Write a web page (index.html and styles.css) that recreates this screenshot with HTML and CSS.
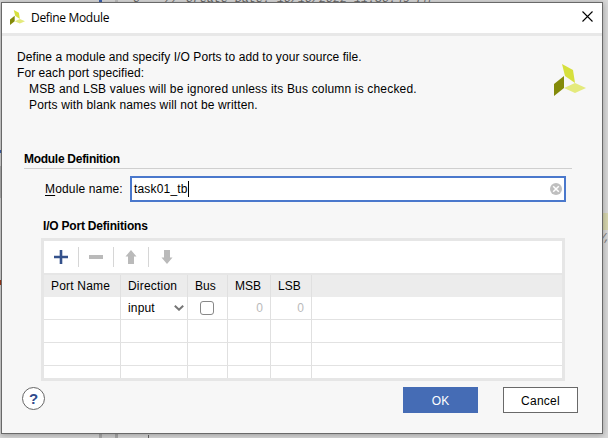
FILE: index.html
```html
<!DOCTYPE html>
<html lang="en">
<head>
<meta charset="utf-8">
<title>Define Module</title>
<link rel="stylesheet" href="styles.css">
</head>
<body>
<div class="editor" aria-hidden="true">
  <span class="line-no">6</span><span class="code">// Create Date: 10/10/2022 11:36:49 PM</span>
  <i class="mark tab"></i><i class="mark gutter"></i><i class="mark side"></i><i class="mark side-dark"></i><i class="mark current"></i>
  <i class="mark pane"></i><i class="mark pane-edge"></i><i class="mark red"></i><span class="slash">/,</span><i class="mark caret-bottom"></i>
</div>
<main class="dialog">
  <header class="titlebar">
    <svg class="logo-small" viewBox="0 0 32 32"><path fill="#d6e03d" d="M8 0l11 6 2 13-10-7z"/><path fill="#838a09" d="M0 20l10-8v12L0 32z"/><path fill="#e4ea7c" d="M10 24l11-5 11 5-11 5z"/></svg>
    <h1>Define Module</h1>
    <svg class="close" viewBox="0 0 11 11"><path d="M.5.5l10 10M10.500.5l-10 10" fill="none" stroke="#000" stroke-width="1.1"/></svg>
  </header>
  <section class="intro">
    <div class="copy">
      <p class="l1">Define a module and specify I/O Ports to add to your source file.</p>
      <p class="l2">For each port specified:</p>
      <p class="l3 indent">MSB and LSB values will be ignored unless its Bus column is checked.</p>
      <p class="l4 indent">Ports with blank names will not be written.</p>
    </div>
    <svg class="logo" viewBox="0 0 32 32"><path fill="#d6e03d" d="M8 0l11 6 2 13-10-7z"/><path fill="#838a09" d="M0 20l10-8v12L0 32z"/><path fill="#e4ea7c" d="M10 24l11-5 11 5-11 5z"/></svg>
  </section>
  <h2 class="section-title"><span>Module Definition</span></h2>
  <div class="field">
    <label><u>M</u>odule name:</label>
    <div class="input"><span class="value">task01_tb</span><i class="caret"></i>
      <svg class="clear" viewBox="0 0 12 12"><circle cx="6" cy="6" r="6" fill="#bfbfbf"/><path d="M3.200 3.200l5.600 5.600M8.800 3.200l-5.600 5.600" stroke="#fff" stroke-width="1.500"/></svg>
    </div>
  </div>
  <h3 class="ports-title"><span>I/O Port Definitions</span></h3>
  <div class="ports">
    <div class="toolbar">
      <span class="tool"><svg viewBox="0 0 14 14"><path d="M0 7h14M7 0v14" stroke="#34518b" stroke-width="2.600"/></svg></span>
      <span class="tool"><svg viewBox="0 0 14 14"><path d="M0 7h14" stroke="#bababa" stroke-width="4"/></svg></span>
      <span class="tool"><svg viewBox="0 0 14 14"><path fill="#bababa" d="M7 0l5.500 6.500H10V14H4V6.500H1.500z"/></svg></span>
      <span class="tool"><svg viewBox="0 0 14 14"><path fill="#bababa" d="M7 14l5.500-6.500H10V0H4v7.500H1.500z"/></svg></span>
    </div>
    <div class="grid">
      <div class="row head"><span class="c-port">Port Name</span><span class="c-dir">Direction</span><span class="c-bus">Bus</span><span>MSB</span><span>LSB</span><span></span></div>
      <div class="row"><span></span><span class="select">input<svg viewBox="0 0 10 6"><path d="M.8.8L5 4.700 9.200.8" fill="none" stroke="#757575" stroke-width="2"/></svg></span><span><i class="check"></i></span><span class="num">0</span><span class="num">0</span><span></span></div>
      <div class="row"><span></span><span></span><span></span><span></span><span></span><span></span></div>
      <div class="row"><span></span><span></span><span></span><span></span><span></span><span></span></div>
      <div class="row last"><span></span><span></span><span></span><span></span><span></span><span></span></div>
    </div>
  </div>
  <footer class="actions">
    <span class="help">?</span>
    <span class="btn primary">OK</span>
    <span class="btn cancel">Cancel</span>
  </footer>
</main>
</body>
</html>
```

FILE: styles.css
```css
* { box-sizing: border-box; }
body { margin: 0; width: 608px; height: 438px; overflow: hidden; font: 12px/16px "Liberation Sans", Arial, sans-serif; color: #000; background: #d8d8d8; padding: 2px 0 0 1px; position: relative; }
h1, h2, h3, p { margin: 0; font-size: 12px; }

/* editor visible around the dialog */
.editor { position: absolute; inset: 0; overflow: hidden; }
.code, .line-no { position: absolute; left: 165px; top: -8px; font: italic 11.6px/14px "Liberation Mono", monospace; color: #666; white-space: pre; letter-spacing: .04px; }
.line-no { left: 133px; }
.mark { position: absolute; }
.tab { left: 99px; top: 0; width: 3px; height: 2px; background: #3d62ae; }
.gutter { left: 115px; top: 0; width: 3px; height: 2px; background: #bcbcbc; }
.side { left: 0; top: 150px; width: 1px; height: 3px; background: #3d62ae; }
.side-dark { left: 0; top: 166px; width: 1px; height: 32px; background: #b4b4b4; }
.current { left: 603px; top: 213px; width: 5px; height: 17px; background: #d6d5ae; }
.pane { left: 99px; top: 434px; width: 19px; height: 4px; background: #cfcfcf; border: solid #aaa; border-width: 0 3px; }
.pane-edge { left: 115px; top: 434px; width: 3px; height: 4px; background: #a9a9a9; }
.red { left: 0; top: 280px; width: 1px; height: 5px; background: #a33a1a; }
.slash { position: absolute; left: 600px; top: 232px; font: italic 11px/12px "Liberation Mono", monospace; letter-spacing: -2.8px; color: #777; }
.caret-bottom { left: 148px; top: 435px; width: 1px; height: 3px; background: #666; }

.dialog { position: relative; width: 602px; height: 432px; border: 1px solid #696969; background: #f7f7f7; box-shadow: 0 1px 6px rgba(0,0,0,.3); display: flex; flex-direction: column; }
.titlebar { height: 33px; flex: none; background: #fff; border-bottom: 3px solid #e8e8e8; display: flex; align-items: center; padding: 0 9px 0 8px; }
.logo-small { width: 15px; height: 15px; margin-top: -2px; }
.titlebar h1 { font: 400 12px/16px "Open Sans", "Noto Sans", sans-serif; letter-spacing: -.32px; margin-left: 6px; margin-top: -1px; }
.close { width: 11px; height: 11px; margin-left: auto; margin-top: -3px; }
.intro { height: 113px; flex: none; display: flex; justify-content: space-between; padding: 13px 16px 0 15px; }
.copy p { white-space: nowrap; }
.l1, .l2 { letter-spacing: .07px; }
.l3 { letter-spacing: .17px; }
.l4 { letter-spacing: .14px; }
.copy .indent { padding-left: 12px; }
.logo { width: 32px; height: 32px; margin-top: 15px; }
.section-title { margin: 2px 30px 0 22px; height: 18px; flex: none; border-bottom: 1px solid #cfcfcf; line-height: 16px; letter-spacing: -.28px; }
.field { display: flex; align-items: center; margin: 7px 0 0 43px; height: 26px; flex: none; }
.field label { width: 85px; letter-spacing: .15px; }
.field u { text-underline-offset: 2px; }
.input { width: 436px; height: 26px; border: 2px solid #4a78cc; background: #fff; display: flex; align-items: center; padding: 0 2px; }
.value { letter-spacing: .18px; }
.caret { width: 1px; height: 16px; background: #000; }
.clear { width: 12px; height: 12px; margin-left: auto; }
.ports-title { margin: 16px 0 0 41px; height: 20px; flex: none; line-height: 17px; letter-spacing: -.2px; }
.ports { margin-left: 39px; width: 524px; height: 143px; flex: none; border: 3px solid #e6e6e6; background: #fff; overflow: hidden; }
.toolbar { height: 34px; border-bottom: 2px solid #e6e6e6; display: flex; align-items: center; }
.tool { width: 35px; height: 20px; border-right: 1px solid #d6d6d6; display: flex; align-items: center; justify-content: center; }
.tool:last-child { border: 0; }
.tool svg { width: 14px; height: 14px; }
.row { display: grid; grid-template-columns: 77px 67px 40px 43px 41px 250px; height: 23px; border-bottom: 1px solid #e2e2e2; }
.row.head { height: 22px; background: #ececec; border: 0; }
.row.last { border: 0; }
.row > span { border-right: 1px solid #e0e0e0; padding-left: 7px; display: flex; align-items: center; white-space: nowrap; }
.row > span:last-child { border: 0; }
.c-port, .c-dir { letter-spacing: .2px; }
.select { letter-spacing: .15px; }
.select svg { width: 10px; height: 6px; margin: -1px 3px 0 auto; }
.check { width: 14px; height: 14px; border: 1px solid #888; border-radius: 3px; margin-left: 5px; background: #fff; }
.row > .num { justify-content: flex-end; padding: 0 7px 0 0; color: #bababa; }
.actions { margin-top: 6px; display: flex; padding-left: 20px; }
.help { width: 23px; height: 23px; border: 1px solid #666; border-radius: 50%; background: #fff; color: #2f4b8c; font: bold 15px/22px "Liberation Sans", Arial, sans-serif; text-align: center; margin-right: 358px; }
.btn { width: 75px; height: 26px; border: 1px solid #696969; background: #fff; text-align: center; line-height: 26px; }
.btn.primary { background: #456cb5; border-color: #456cb5; color: #fff; margin-right: 25px; }
.cancel { letter-spacing: .25px; }
```
